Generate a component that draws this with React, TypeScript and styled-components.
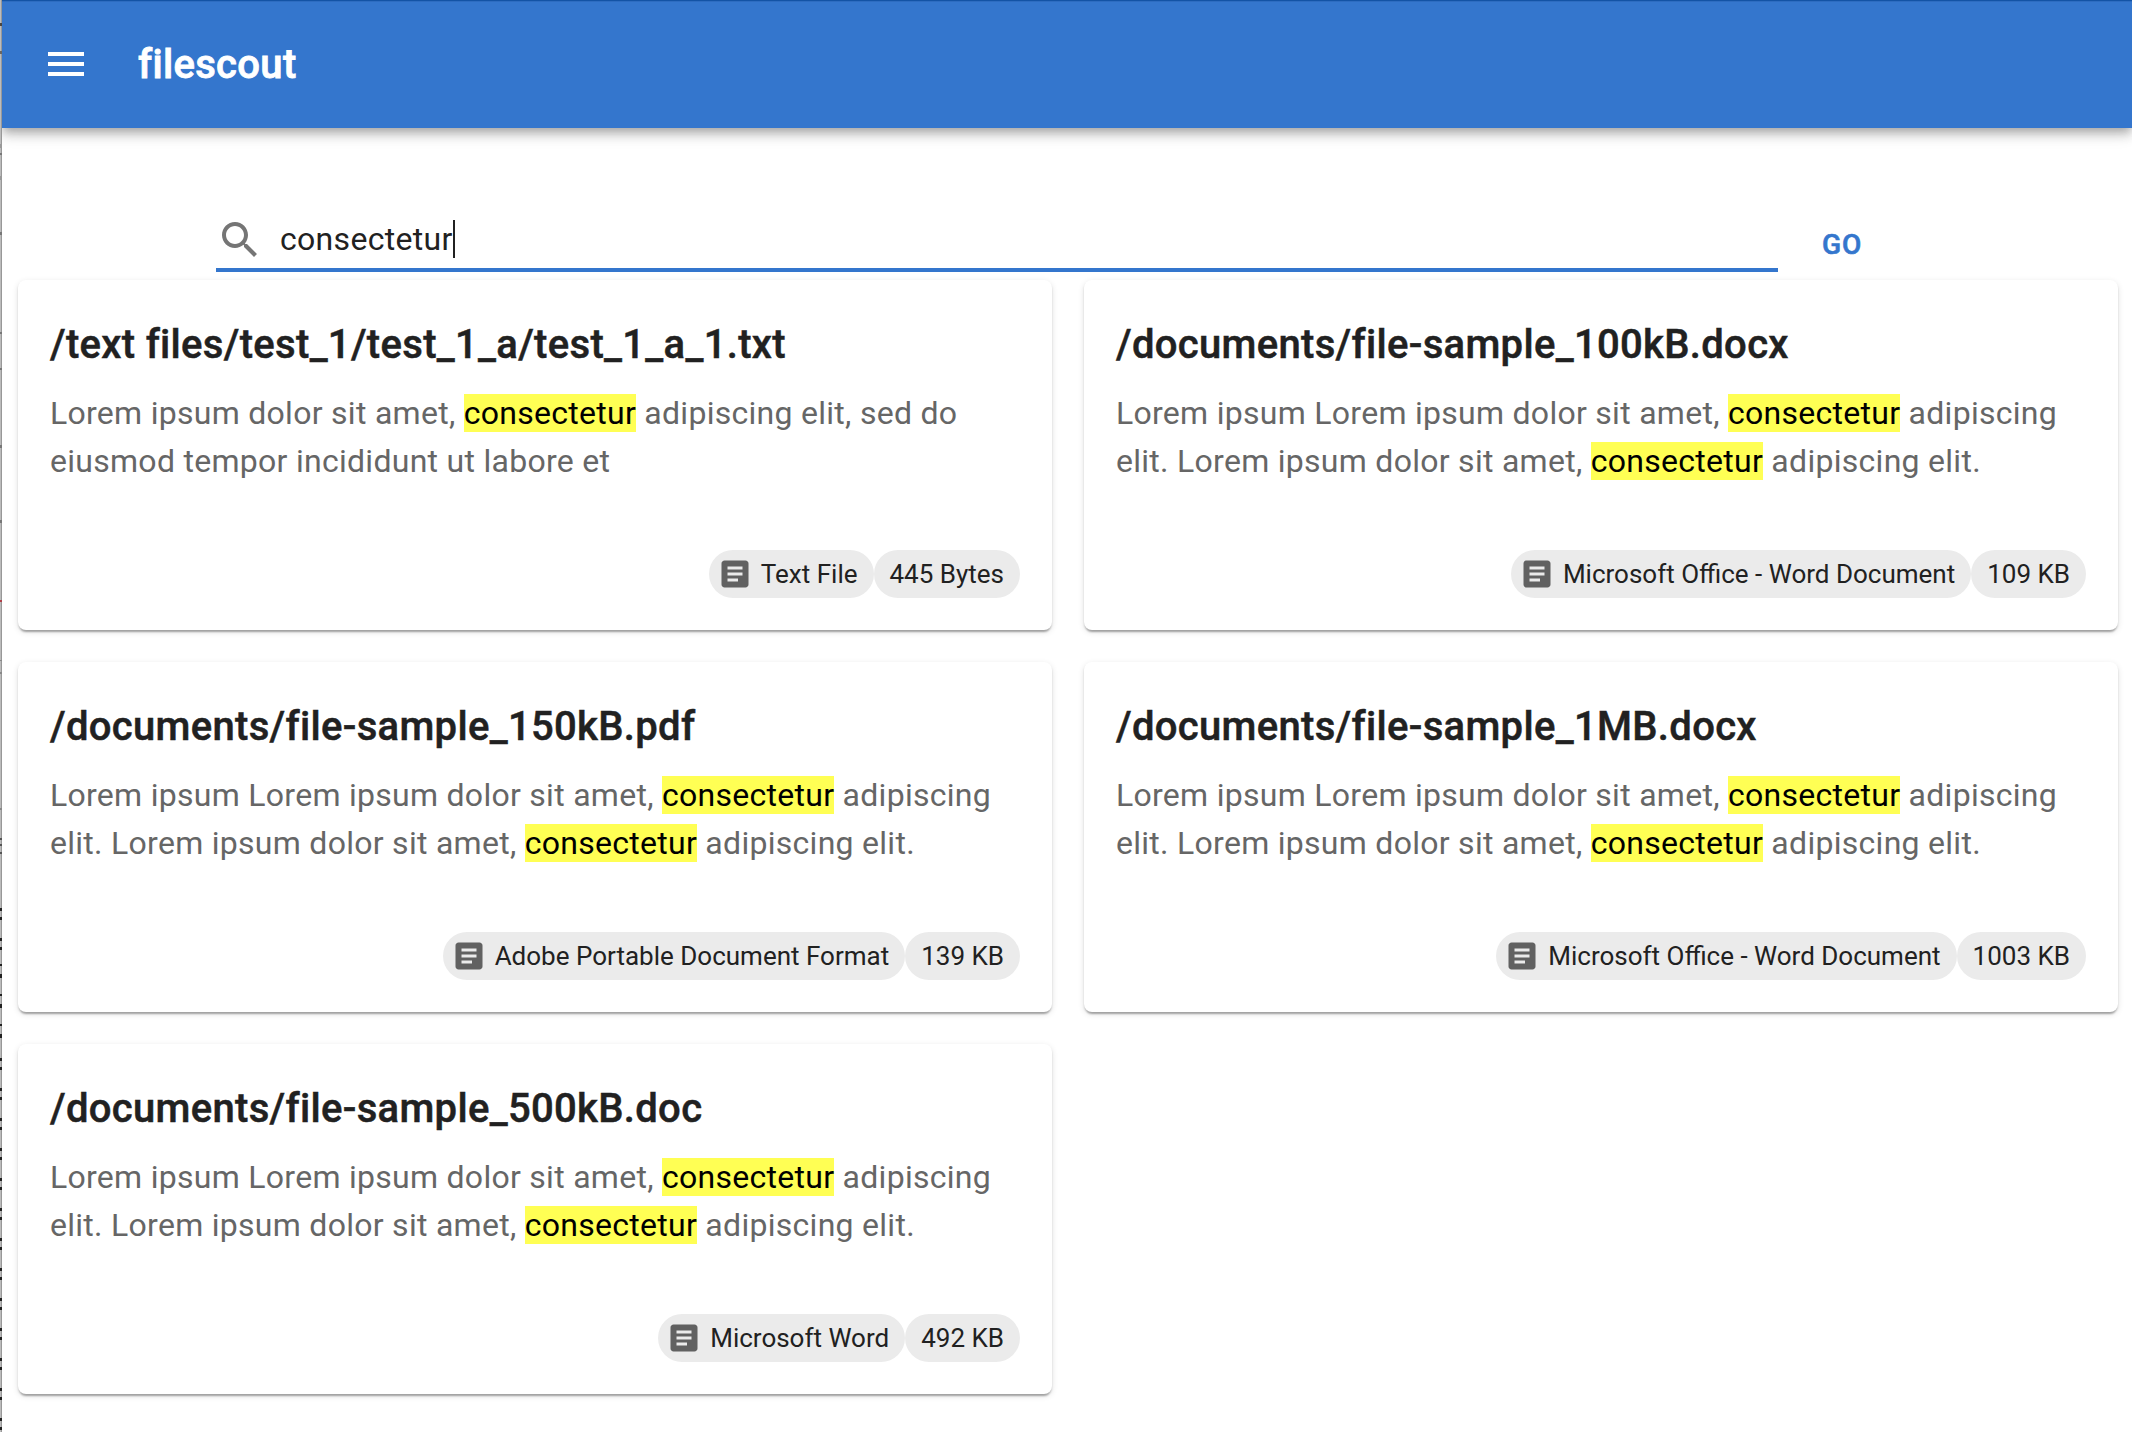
import React, { useState } from 'react';
import styled, { createGlobalStyle } from 'styled-components';

const GlobalStyle = createGlobalStyle`
  *, *::before, *::after { box-sizing: border-box; }
  body {
    margin: 0;
    background: #fff;
    font-family: Roboto, "Liberation Sans", sans-serif;
    color: #212121;
    -webkit-font-smoothing: antialiased;
  }
`;

type EdgeTick = { top: number; height: number; color: string };

const tick = (top: number, color = '#222', height = 3): EdgeTick => ({ top, height, color });

const EDGE_TICKS: EdgeTick[] = [
  tick(23, '#4a4640'),
  tick(51, '#6a6660'),
  tick(144, '#999', 4),
  tick(153, '#777', 2),
  tick(176, '#999', 4),
  tick(232, '#777'),
  tick(332, '#777', 2),
  tick(368, '#777', 2),
  tick(445, '#777'),
  tick(520, '#777'),
  tick(600, '#b04048', 2),
  tick(660, '#888', 1),
  tick(672, '#888', 2),
  tick(808, '#888', 2),
  tick(838, '#555', 2),
  tick(844, '#555', 2),
  tick(852, '#555', 2),
  ...[908, 938].flatMap((top) => [tick(top), tick(top + 9)]),
  ...[964, 994, 1024].flatMap((top) => [tick(top, '#222', 2), tick(top + 10, '#222', 4)]),
  ...Array.from({ length: 13 }, (_, i) => 1058 + i * 30).flatMap((top) => [tick(top), tick(top + 9)]),
];

const Window = styled.div`
  display: grid;
  grid-template-columns: 2px minmax(0, 1fr);
  width: 100%;
  height: 1432px;
  overflow: hidden;
`;

const WindowEdge = styled.div`
  background: linear-gradient(90deg, #bcbcbc 0 1px, #989898 1px 2px);
  position: relative;
`;

const EdgeMark = styled.i`
  position: absolute;
  left: 0;
  width: 2px;
`;

const Page = styled.div`
  display: flex;
  flex-direction: column;
  min-width: 0;
`;

const AppBar = styled.header`
  display: flex;
  align-items: center;
  flex: none;
  height: 128px;
  padding-left: 40px;
  gap: 48px;
  color: #fff;
  background: linear-gradient(#1353a5 0 1px, #2d6cc0 1px 2px, #3476cd 2px);
  box-shadow: 0 4px 8px -2px rgba(0, 0, 0, 0.2), 0 8px 10px 0 rgba(0, 0, 0, 0.14),
    0 2px 20px 0 rgba(0, 0, 0, 0.12);
`;

const Icon = styled.svg<{ $size: number }>`
  flex: none;
  display: block;
  width: ${(p) => p.$size}px;
  height: ${(p) => p.$size}px;
  fill: currentColor;
`;

const IconButton = styled.button`
  border: 0;
  padding: 0;
  background: none;
  color: inherit;
`;

const Brand = styled.h1`
  margin: 0;
  padding-top: 2px;
  font-size: 40px;
  font-weight: 500;
  line-height: 64px;
  letter-spacing: 0.32px;
  -webkit-text-stroke: 0.8px currentColor;
`;

const SearchRow = styled.form`
  display: flex;
  align-items: flex-end;
  height: 152px;
  flex: none;
  padding-left: 214px;
`;

const SearchField = styled.label`
  display: flex;
  align-items: center;
  gap: 16px;
  width: 1562px;
  height: 60px;
  margin-bottom: 8px;
  border-bottom: 4px solid #3476cd;
  color: #757575;
`;

const Query = styled.span`
  display: flex;
  align-items: center;
  margin-top: -2px;
  color: #212121;
  font-size: 32px;
  line-height: 46px;
  letter-spacing: 0.3px;
`;

const Caret = styled.span`
  width: 2px;
  height: 38px;
  background: #212121;
`;

const GoButton = styled.button`
  width: 128px;
  height: 73px;
  border: 0;
  padding: 13px 16px 11px;
  background: none;
  color: #3476cd;
  font: 500 28px/49px Roboto, "Liberation Sans", sans-serif;
  letter-spacing: 0.8px;
  -webkit-text-stroke: 0.6px currentColor;
`;

const Results = styled.main`
  display: grid;
  grid-template-columns: 1034px 1034px;
  grid-auto-rows: 350px;
  gap: 32px;
  padding-left: 16px;
`;

const Card = styled.article`
  display: flex;
  flex-direction: column;
  padding: 32px;
  border-radius: 8px;
  background: #fff;
  box-shadow: 0 4px 2px -2px rgba(0, 0, 0, 0.2), 0 2px 2px 0 rgba(0, 0, 0, 0.14),
    0 2px 6px 0 rgba(0, 0, 0, 0.12);
`;

const CardTitle = styled.h2`
  margin: 0 0 12px;
  padding-top: 1px;
  font-size: 40px;
  font-weight: 500;
  line-height: 64px;
  letter-spacing: 0.32px;
  white-space: nowrap;
  -webkit-text-stroke: 0.5px currentColor;
`;

const Excerpt = styled.p`
  margin: 0;
  color: #666;
  font-size: 32px;
  line-height: 48px;
  letter-spacing: 0.28px;
`;

const Mark = styled.mark`
  background: #ffff54;
  color: #000;
`;

const Chips = styled.footer`
  display: flex;
  justify-content: flex-end;
  margin-top: auto;
`;

const Chip = styled.span<{ $withIcon?: boolean }>`
  display: flex;
  align-items: center;
  gap: 8px;
  height: 48px;
  padding: 0 16px 0 ${(p) => (p.$withIcon ? 8 : 16)}px;
  border-radius: 24px;
  background: #ebebeb;
  font-size: 26px;
  line-height: 39px;
  white-space: nowrap;

  svg { color: #616161; }
`;

type Result = { path: string; lines: string[]; kind: string; size: string };

const SAMPLE = [
  'Lorem ipsum Lorem ipsum dolor sit amet, consectetur adipiscing',
  'elit. Lorem ipsum dolor sit amet, consectetur adipiscing elit.',
];

const RESULTS: Result[] = [
  {
    path: '/text files/test_1/test_1_a/test_1_a_1.txt',
    lines: [
      'Lorem ipsum dolor sit amet, consectetur adipiscing elit, sed do',
      'eiusmod tempor incididunt ut labore et',
    ],
    kind: 'Text File',
    size: '445 Bytes',
  },
  { path: '/documents/file-sample_100kB.docx', lines: SAMPLE, kind: 'Microsoft Office - Word Document', size: '109 KB' },
  { path: '/documents/file-sample_150kB.pdf', lines: SAMPLE, kind: 'Adobe Portable Document Format', size: '139 KB' },
  { path: '/documents/file-sample_1MB.docx', lines: SAMPLE, kind: 'Microsoft Office - Word Document', size: '1003 KB' },
  { path: '/documents/file-sample_500kB.doc', lines: SAMPLE, kind: 'Microsoft Word', size: '492 KB' },
];

function Highlighted({ text, term }: { text: string; term: string }) {
  const parts = text.split(term);
  return (
    <>
      {parts.map((part, i) => (
        <React.Fragment key={i}>
          {i > 0 && <Mark>{term}</Mark>}
          {part}
        </React.Fragment>
      ))}
    </>
  );
}

export default function App() {
  const [query] = useState('consectetur');
  return (
    <>
      <GlobalStyle />
      <Window>
        <WindowEdge>
          {EDGE_TICKS.map(({ top, height, color }) => (
            <EdgeMark key={top} style={{ top, height, background: color }} />
          ))}
        </WindowEdge>
        <Page>
          <AppBar>
            <IconButton aria-label="Menu">
              <Icon $size={48} viewBox="0 0 24 24">
                <path d="M3 18h18v-2H3v2zm0-5h18v-2H3v2zm0-7v2h18V6H3z" />
              </Icon>
            </IconButton>
            <Brand>filescout</Brand>
          </AppBar>
          <SearchRow onSubmit={(e) => e.preventDefault()}>
            <SearchField>
              <Icon $size={48} viewBox="0 0 24 24">
                <path d="M15.5 14h-.79l-.28-.27C15.41 12.59 16 11.11 16 9.5 16 5.91 13.09 3 9.5 3S3 5.91 3 9.5 5.91 16 9.5 16c1.61 0 3.09-.59 4.23-1.57l.27.28v.79l5 4.99L20.49 19l-4.99-5zm-6 0C7.01 14 5 11.99 5 9.5S7.01 5 9.5 5 14 7.01 14 9.5 11.99 14 9.5 14z" />
              </Icon>
              <Query>
                {query}
                <Caret />
              </Query>
            </SearchField>
            <GoButton>GO</GoButton>
          </SearchRow>
          <Results>
            {RESULTS.map((r) => (
              <Card key={r.path}>
                <CardTitle>{r.path}</CardTitle>
                <Excerpt>
                  {r.lines.map((line, i) => (
                    <React.Fragment key={i}>
                      {i > 0 && <br />}
                      <Highlighted text={line} term={query} />
                    </React.Fragment>
                  ))}
                </Excerpt>
                <Chips>
                  <Chip $withIcon>
                    <Icon $size={36} viewBox="0 0 24 24">
                      <path d="M19 3H5c-1.1 0-2 .9-2 2v14c0 1.1.9 2 2 2h14c1.1 0 2-.9 2-2V5c0-1.1-.9-2-2-2zm-5 14H7v-2h7v2zm3-4H7v-2h10v2zm0-4H7V7h10v2z" />
                    </Icon>
                    {r.kind}
                  </Chip>
                  <Chip>{r.size}</Chip>
                </Chips>
              </Card>
            ))}
          </Results>
        </Page>
      </Window>
    </>
  );
}
